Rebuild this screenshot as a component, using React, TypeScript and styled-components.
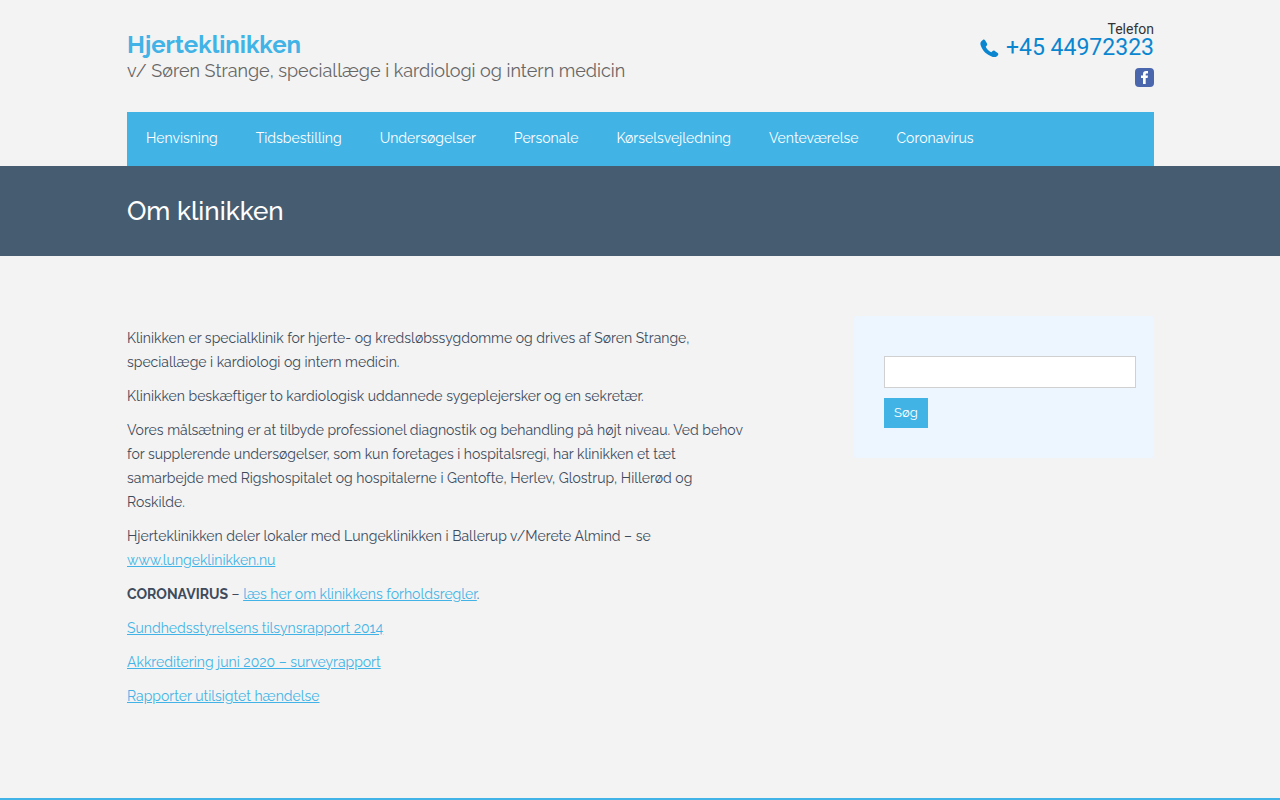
import React from 'react';
import styled, { createGlobalStyle } from 'styled-components';

const GlobalStyle = createGlobalStyle`
  *, *::before, *::after { box-sizing: border-box; }
  body {
    margin: 0;
    background: #f3f3f3;
    color: #3d4b5c;
    font: 14px/24px Raleway, Lato, sans-serif;
    font-variant-numeric: oldstyle-nums;
  }
`;

const Container = styled.div`
  max-width: 1028px;
  margin: 0 auto;
  padding-left: 1px;
`;

const HeaderRow = styled.div`
  display: flex;
  justify-content: space-between;
  height: 112px;
`;

const Brand = styled.div`
  padding-top: 32px;
`;

const SiteName = styled.a`
  display: block;
  color: #41b3e6;
  font-size: 24px;
  line-height: 26px;
  font-weight: 700;
  text-decoration: none;
`;

const Tagline = styled.p`
  margin: 0;
  color: #666;
  font-size: 18px;
  line-height: 26px;
`;

const Contact = styled.div`
  display: flex;
  flex-direction: column;
  align-items: flex-end;
  padding-top: 20px;
  color: #333;
  font-family: Roboto, sans-serif;
  font-variant-numeric: normal;
  line-height: 18px;
`;

const Phone = styled.a`
  display: flex;
  align-items: center;
  gap: 6px;
  color: #0a86d1;
  font-size: 23px;
  line-height: 20px;
  text-decoration: none;
`;

const Social = styled.a`
  display: block;
  height: 19px;
  margin-top: 10px;
`;

const Nav = styled.nav`
  display: flex;
  height: 54px;
  background: #42b3e5;
`;

const NavLink = styled.a`
  padding: 14px 19px;
  color: #fff;
  text-decoration: none;
`;

const TitleBand = styled.div`
  background: #465c70;
`;

const Title = styled.h1`
  margin: 0;
  padding: 30px 0;
  color: #fff;
  font-size: 26px;
  line-height: 30px;
  font-weight: 500;
`;

const Content = styled(Container)`
  display: flex;
  justify-content: space-between;
  align-items: flex-start;
  padding-top: 60px;
  padding-bottom: 80px;
`;

const Article = styled.main`
  flex: 0 1 620px;
  padding-top: 10px;
`;

const Paragraph = styled.p`
  margin: 0 0 10px;
`;

const Link = styled.a`
  color: #41b3e6;
`;

const Sidebar = styled.aside`
  flex: 0 0 300px;
  padding: 40px 18px 30px 30px;
  border-radius: 2px;
  background: #edf5ff;
`;

const SearchForm = styled.form`
  display: flex;
  flex-direction: column;
  align-items: flex-start;
  gap: 10px;
`;

const SearchInput = styled.input`
  width: 100%;
  height: 32px;
  padding: 4px 8px;
  border: 1px solid #d0d0d0;
  background: #fff;
  font: inherit;
`;

const SearchButton = styled.button`
  height: 30px;
  padding: 0 10px;
  border: 0;
  background: #42b3e5;
  color: #fff;
  font: 13px/30px Raleway, Lato, sans-serif;
`;

const Footer = styled.footer`
  border-top: 2px solid #41b3e6;
`;

const menu = [
  'Henvisning',
  'Tidsbestilling',
  'Undersøgelser',
  'Personale',
  'Kørselsvejledning',
  'Venteværelse',
  'Coronavirus',
];

const PhoneIcon = () => (
  <svg width="20" height="20" viewBox="0 0 20 20" fill="#0a86d1" aria-hidden="true">
    <path d="M2.800 1.900 C1 3 0 4.400 .5 6.800 C2 12.600 7 17.300 12.800 18.900 C15.400 19.500 17.200 18.700 18.200 16.800 C18.500 16.100 18.300 15.500 17.700 15 L14.800 13 C14 12.400 13.200 12.500 12.600 13.100 L11.300 14.300 C8.800 13 6.900 11.100 5.700 8.700 L6.800 7.400 C7.300 6.800 7.400 6.100 7 5.400 L5.200 2.400 C4.600 1.500 3.700 1.400 2.800 1.900 Z" />
  </svg>
);

const FacebookIcon = () => (
  <svg width="19" height="19" viewBox="0 0 19 19" aria-hidden="true">
    <rect width="19" height="19" rx="4" fill="#4a66ad" />
    <path
      d="M8 16V10H6V7.500h2V6c0-2 1.100-3 3-3h2v2.500h-1.300c-.8 0-1 .3-1 1v1h2.300L12.600 10h-1.900v6Z"
      fill="#fff"
    />
  </svg>
);

export default function App() {
  return (
    <>
      <GlobalStyle />
      <Container as="header">
        <HeaderRow>
          <Brand>
            <SiteName href="#">Hjerteklinikken</SiteName>
            <Tagline>v/ Søren Strange, speciallæge i kardiologi og intern medicin</Tagline>
          </Brand>
          <Contact>
            <span>Telefon</span>
            <Phone href="tel:+4544972323">
              <PhoneIcon />
              +45 44972323
            </Phone>
            <Social href="#" aria-label="Facebook">
              <FacebookIcon />
            </Social>
          </Contact>
        </HeaderRow>
        <Nav>
          {menu.map((item) => (
            <NavLink key={item} href="#">{item}</NavLink>
          ))}
        </Nav>
      </Container>
      <TitleBand>
        <Container>
          <Title>Om klinikken</Title>
        </Container>
      </TitleBand>
      <Content>
        <Article>
          <Paragraph>
            Klinikken er specialklinik for hjerte- og kredsløbssygdomme og drives af Søren Strange,
            speciallæge i kardiologi og intern medicin.
          </Paragraph>
          <Paragraph>
            Klinikken beskæftiger to kardiologisk uddannede sygeplejersker og en sekretær.
          </Paragraph>
          <Paragraph>
            Vores målsætning er at tilbyde professionel diagnostik og behandling på højt niveau. Ved
            behov for supplerende undersøgelser, som kun foretages i hospitalsregi, har klinikken et
            tæt samarbejde med Rigshospitalet og hospitalerne i Gentofte, Herlev, Glostrup, Hillerød
            og Roskilde.
          </Paragraph>
          <Paragraph>
            Hjerteklinikken deler lokaler med Lungeklinikken i Ballerup v/Merete Almind – se{' '}
            <Link href="#">www.lungeklinikken.nu</Link>
          </Paragraph>
          <Paragraph>
            <strong>CORONAVIRUS</strong> – <Link href="#">læs her om klinikkens forholdsregler</Link>.
          </Paragraph>
          <Paragraph>
            <Link href="#">Sundhedsstyrelsens tilsynsrapport 2014</Link>
          </Paragraph>
          <Paragraph>
            <Link href="#">Akkreditering juni 2020 – surveyrapport</Link>
          </Paragraph>
          <Paragraph>
            <Link href="#">Rapporter utilsigtet hændelse</Link>
          </Paragraph>
        </Article>
        <Sidebar>
          <SearchForm onSubmit={(event) => event.preventDefault()}>
            <SearchInput type="search" aria-label="Søg efter" />
            <SearchButton type="submit">Søg</SearchButton>
          </SearchForm>
        </Sidebar>
      </Content>
      <Footer />
    </>
  );
}
